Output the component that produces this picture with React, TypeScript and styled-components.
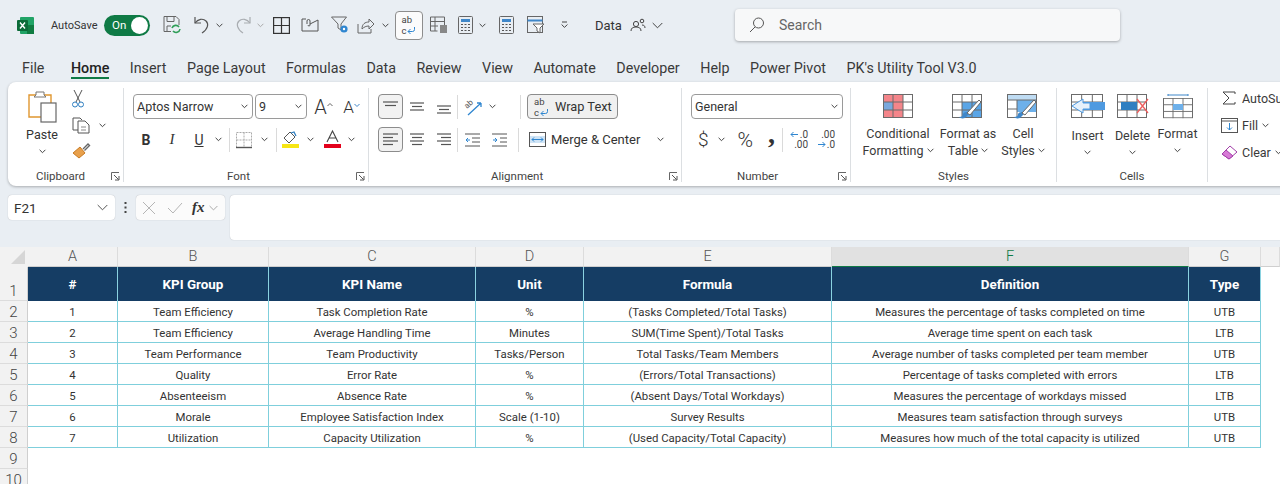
import React from "react";
import styled, { createGlobalStyle } from "styled-components";

const GlobalStyle = createGlobalStyle`
  html, body { margin: 0; padding: 0; background: #e9eef3; overflow: hidden; }
  body { font-family: Roboto, "Liberation Sans", sans-serif; color: #333; }
`;

const Page = styled.div`
  width: 1280px;
  height: 484px;
  overflow: hidden;
  display: flex;
  flex-direction: column;
  background: #e9eef3;
`;

/* ---- shared icon bits ---- */
const Svg = styled.svg<{ $ml?: number }>`
  display: block;
  flex: none;
  overflow: visible;
  margin-left: ${(p) => p.$ml ?? 0}px;
`;

type IconProps = { w: number; h: number; ml?: number; children?: React.ReactNode };
const Ic = ({ w, h, ml, children }: IconProps) => (
  <Svg width={w} height={h} viewBox={`0 0 ${w} ${h}`} fill="none" $ml={ml}>
    {children}
  </Svg>
);

const Chev = ({ ml, c = "#444" }: { ml?: number; c?: string }) => (
  <Ic w={7} h={5} ml={ml}>
    <path d="M.6 .8 3.5 3.7 6.4 .8" stroke={c} strokeWidth="1" />
  </Ic>
);

const Launcher = () => (
  <Ic w={9} h={9}>
    <path d="M.5 8V.5H8" stroke="#666" />
    <path d="M3 3 7.5 7.5M8 4v4H4" stroke="#555" />
  </Ic>
);

const Lines = ({ ml, rows, c = "#555" }: { ml?: number; rows: number[][]; c?: string }) => (
  <Ic w={15} h={15} ml={ml}>
    {rows.map(([a, b, y], i) => (
      <path key={i} d={`M${a} ${y}H${b}`} stroke={c} strokeWidth="1.2" />
    ))}
  </Ic>
);

const GridBase = ({ w = 30, h = 24, c = "#6b6b6b" }: { w?: number; h?: number; c?: string }) => (
  <>
    <rect x=".5" y=".5" width={w - 1} height={h - 1} stroke={c} />
    <path d={`M${w / 3} 0V${h}M${(2 * w) / 3} 0V${h}M0 ${h / 3}H${w}M0 ${(2 * h) / 3}H${w}`} stroke={c} />
  </>
);

const Brush = () => (
  <>
    <path d="M13 24c-3 1-5 0-6-1 3 0 4-1 4-3 1-2 5-3 6 0z" fill="#3f87c9" />
    <path d="M15 19 27 6l2 2-11 13z" fill="#fff" stroke="#666" />
  </>
);

/* "ab / c" wrap-text mark, in the quick access bar and on the Wrap Text button */
const WrapMark = styled.div`
  flex: none;
  font-size: 9.5px;
  line-height: 11px;
  color: #444;
`;
const WrapMarkLine = styled.div`
  display: flex;
  align-items: center;
  gap: 1px;
`;
const AbcMark = () => (
  <WrapMark>
    <WrapMarkLine>ab</WrapMarkLine>
    <WrapMarkLine>
      c
      <Ic w={9} h={9}>
        <path d="M7.5 1v2.5a2 2 0 0 1-2 2H1M3.5 3 1 5.5 3.5 8" stroke="#2f86d0" />
      </Ic>
    </WrapMarkLine>
  </WrapMark>
);

/* ---- title bar ---- */
const TitleBar = styled.div`
  height: 50px;
  padding-left: 17px;
  display: flex;
  align-items: center;
  flex: none;
`;
const AutoSave = styled.span`
  margin-left: 17px;
  width: 45px;
  flex: none;
  font-size: 11px;
  color: #333;
`;
const Toggle = styled.div`
  margin-left: 8px;
  width: 46px;
  height: 21px;
  box-sizing: border-box;
  flex: none;
  border-radius: 11px;
  background: #0f7a45;
  color: #fff;
  font-size: 11.5px;
  display: flex;
  align-items: center;
  justify-content: space-between;
  padding: 0 2px 0 8px;
  &::after {
    content: "";
    width: 17px;
    height: 17px;
    border-radius: 50%;
    background: #fff;
  }
`;
const QatBoxed = styled.div`
  margin-left: 6px;
  width: 28px;
  height: 29px;
  box-sizing: border-box;
  border: 1px solid #8d8d8d;
  border-radius: 4px;
  background: #fbfbfb;
  display: flex;
  align-items: center;
  justify-content: center;
  flex: none;
`;
const DocName = styled.span`
  margin-left: 27px;
  font-size: 13px;
  color: #333;
`;
const SearchBox = styled.div`
  margin-left: 72px;
  margin-bottom: 1px;
  width: 385px;
  height: 32px;
  box-sizing: border-box;
  flex: none;
  background: #f7f8f9;
  border-radius: 4px;
  box-shadow: 0 1px 3px rgba(0, 0, 0, 0.3);
  display: flex;
  align-items: center;
  gap: 15px;
  padding-left: 14px;
  font-size: 14px;
  color: #666;
`;

/* ---- tabs ---- */
const TabBar = styled.div`
  height: 32px;
  flex: none;
  display: flex;
  align-items: flex-start;
  padding: 7px 0 0 22px;
  gap: 20.5px;
  box-sizing: border-box;
`;
const Tab = styled.div<{ $on?: boolean }>`
  font-size: 14.3px;
  line-height: 22px;
  height: 20px;
  color: ${(p) => (p.$on ? "#222" : "#3a3a3a")};
  font-weight: ${(p) => (p.$on ? 500 : 400)};
  margin-left: ${(p) => (p.$on ? 6 : 0)}px;
  border-bottom: ${(p) => (p.$on ? "2px solid #0f7a45" : "2px solid transparent")};
  white-space: nowrap;
`;

/* ---- ribbon ---- */
const Ribbon = styled.div`
  margin-left: 8px;
  width: 1290px;
  height: 104px;
  flex: none;
  box-sizing: border-box;
  padding: 6px 0 4px;
  background: #fff;
  border-radius: 8px;
  box-shadow: 0 1px 3px rgba(0, 0, 0, 0.28);
  display: flex;
`;
const Group = styled.div<{ $w: number; $last?: boolean }>`
  width: ${(p) => p.$w}px;
  flex: none;
  box-sizing: border-box;
  display: flex;
  flex-direction: column;
  border-right: ${(p) => (p.$last ? "none" : "1px solid #dcdfe2")};
`;
const GroupBody = styled.div<{ $pl?: number }>`
  flex: 1;
  padding-left: ${(p) => p.$pl ?? 0}px;
  display: flex;
  min-height: 0;
`;
const GroupFoot = styled.div<{ $pl?: number }>`
  height: 12px;
  font-size: 11.5px;
  color: #444;
  display: flex;
  align-items: center;
  justify-content: space-between;
  padding: 0 3px 0 ${(p) => p.$pl ?? 0}px;
`;
const FootCentered = styled(GroupFoot)`
  justify-content: center;
  padding: 0;
`;
const Stack = styled.div`
  display: flex;
  flex-direction: column;
  padding-top: 6px;
  gap: 8px;
`;
const Row = styled.div`
  height: 25px;
  display: flex;
  align-items: center;
`;
const Select = styled.div<{ $w: number; $ml?: number }>`
  width: ${(p) => p.$w}px;
  margin-left: ${(p) => p.$ml ?? 0}px;
  height: 25px;
  box-sizing: border-box;
  flex: none;
  border: 1px solid #9a9a9a;
  border-radius: 4px;
  background: #fff;
  font-size: 12.5px;
  color: #333;
  display: flex;
  align-items: center;
  justify-content: space-between;
  padding: 0 4px 0 3px;
`;
const Sep = styled.div<{ $ml: number }>`
  width: 1px;
  height: 24px;
  flex: none;
  background: #dadada;
  margin-left: ${(p) => p.$ml}px;
`;
const Letter = styled.span<{ $ml: number; $w?: number }>`
  margin-left: ${(p) => p.$ml}px;
  width: ${(p) => p.$w ?? 10}px;
  flex: none;
  text-align: center;
  font-size: 14px;
  color: #333;
`;
const BoldLetter = styled(Letter)`
  font-weight: 700;
`;
const ItalicLetter = styled(Letter)`
  font-style: italic;
  font-family: "Liberation Serif", serif;
  font-size: 15px;
`;
const UnderLetter = styled(Letter)`
  text-decoration: underline;
`;
const GrowLetter = styled(Letter)<{ $size: number }>`
  font-size: ${(p) => p.$size}px;
  font-weight: 300;
`;
const SymbolText = styled.span<{ $ml: number; $size: number }>`
  margin-left: ${(p) => p.$ml}px;
  font-size: ${(p) => p.$size}px;
  font-weight: 300;
  color: #333;
  flex: none;
`;
const CommaText = styled.span`
  margin: 0 0 12px 15px;
  width: 8px;
  flex: none;
  font-family: "Liberation Serif", serif;
  font-weight: 700;
  font-size: 28px;
  line-height: 25px;
  color: #333;
`;
const AlignBtn = styled.div<{ $ml?: number }>`
  width: 25px;
  height: 25px;
  box-sizing: border-box;
  flex: none;
  margin-left: ${(p) => p.$ml ?? 0}px;
  border: 1px solid #8c8c8c;
  border-radius: 4px;
  background: #f2f2f2;
  display: flex;
  align-items: center;
  justify-content: center;
`;
const WrapBtn = styled.div<{ $ml: number }>`
  margin-left: ${(p) => p.$ml}px;
  width: 91px;
  height: 25px;
  box-sizing: border-box;
  flex: none;
  border: 1px solid #8c8c8c;
  border-radius: 4px;
  background: #f0f0f0;
  display: flex;
  align-items: center;
  gap: 6px;
  padding-left: 6px;
  font-size: 12.8px;
  color: #333;
`;
const MergeText = styled.span`
  margin-left: 5px;
  width: 106px;
  flex: none;
  font-size: 13px;
  color: #333;
`;
const DecStack = styled.div<{ $ml: number }>`
  margin-left: ${(p) => p.$ml}px;
  width: 18px;
  flex: none;
  font-size: 10px;
  line-height: 10px;
  color: #444;
  display: flex;
  flex-direction: column;
  align-items: flex-end;
`;
const DecLine = styled.div`
  display: flex;
  align-items: center;
  gap: 1px;
`;

const PasteCol = styled.div`
  width: 48px;
  margin-left: 10px;
  padding-top: 2px;
  display: flex;
  flex-direction: column;
  align-items: center;
  font-size: 12.5px;
  color: #333;
`;
const PasteLabel = styled.div`
  margin-top: 4px;
  line-height: 16px;
`;
const PasteChev = styled.div`
  margin-top: 6px;
`;
const ClipCol = styled.div`
  margin-left: 2px;
  padding-top: 1px;
  display: flex;
  flex-direction: column;
  gap: 6px;
`;
const ClipRow = styled.div`
  display: flex;
  align-items: center;
  height: 20px;
  padding-left: 4px;
`;

const Large = styled.div<{ $w: number; $ml?: number }>`
  width: ${(p) => p.$w}px;
  margin-left: ${(p) => p.$ml ?? 0}px;
  flex: none;
  padding-top: 6px;
  display: flex;
  flex-direction: column;
  align-items: center;
  font-size: 12.5px;
  line-height: 17px;
  color: #3a3a3a;
`;
const LargeText = styled.div<{ $mt: number }>`
  margin-top: ${(p) => p.$mt}px;
  display: flex;
  flex-direction: column;
  align-items: center;
  white-space: nowrap;
`;
const LabelLine = styled.div`
  display: flex;
  align-items: center;
  gap: 3px;
`;
const ChevLine = styled.div`
  height: 17px;
  display: flex;
  align-items: center;
`;

const EditCol = styled.div`
  padding: 0 0 0 13px;
  display: flex;
  flex-direction: column;
  gap: 7px;
`;
const EditRow = styled.div`
  height: 20px;
  display: flex;
  align-items: center;
  gap: 4px;
  font-size: 12.5px;
  color: #3a3a3a;
  white-space: nowrap;
`;

/* ---- formula bar ---- */
const FormulaBar = styled.div`
  margin-top: 9px;
  height: 52px;
  flex: none;
  display: flex;
  align-items: flex-start;
  padding-left: 8px;
`;
const NameBox = styled.div`
  width: 107px;
  height: 25px;
  box-sizing: border-box;
  background: #fff;
  border-radius: 4px;
  box-shadow: 0 0 1px rgba(0, 0, 0, 0.3);
  display: flex;
  align-items: center;
  justify-content: space-between;
  padding: 0 7px 0 6px;
  font-size: 13.5px;
  color: #333;
`;
const DotsSlot = styled.div`
  width: 21px;
  height: 25px;
  display: flex;
  align-items: center;
  justify-content: center;
`;
const FxBox = styled.div`
  width: 89px;
  height: 25px;
  box-sizing: border-box;
  background: #fbfbfb;
  border-radius: 4px;
  box-shadow: 0 0 1px rgba(0, 0, 0, 0.3);
  display: flex;
  align-items: center;
  padding-left: 6px;
`;
const FxLabel = styled.span`
  margin-left: 9px;
  font-family: "Liberation Serif", serif;
  font-style: italic;
  font-weight: 700;
  font-size: 15px;
  color: #333;
`;
const FormulaInput = styled.div`
  margin-left: 5px;
  flex: 1;
  height: 45px;
  background: #fff;
  border-radius: 4px 0 0 4px;
  box-shadow: 0 0 1px rgba(0, 0, 0, 0.3);
`;

/* ---- sheet ---- */
const Sheet = styled.div`
  flex: 1;
  background: #fff;
  display: grid;
  grid-template-columns: 28px 90px 151px 207px 108px 248px 357px 72px 1fr;
  grid-template-rows: 20px 34px repeat(9, 21px);
`;
const Corner = styled.div`
  background: #f2f2f2;
  display: flex;
  align-items: flex-end;
  justify-content: flex-end;
  padding: 0 3px 3px 0;
`;
const ColHead = styled.div<{ $on?: boolean }>`
  background: ${(p) => (p.$on ? "#e1e1e1" : "#f2f2f2")};
  border-right: 1px solid #dcdcdc;
  border-bottom: 1px solid ${(p) => (p.$on ? "#0f7a45" : "#cfcfcf")};
  box-sizing: border-box;
  display: flex;
  align-items: center;
  justify-content: center;
  font-size: 14.5px;
  font-weight: 300;
  color: ${(p) => (p.$on ? "#0f7a45" : "#555")};
`;
const RowHead = styled.div`
  grid-column: 1;
  background: #f2f2f2;
  border-bottom: 1px solid #dcdcdc;
  border-right: 1px solid #cfcfcf;
  box-sizing: border-box;
  display: flex;
  align-items: flex-end;
  justify-content: center;
  font-size: 15px;
  font-weight: 300;
  line-height: 17px;
  color: #444;
`;
const HeadCell = styled.div`
  background: #153d64;
  color: #fff;
  font-weight: 700;
  font-size: 13.4px;
  border-right: 1px solid #8ad2e0;
  box-sizing: border-box;
  display: flex;
  align-items: center;
  justify-content: center;
`;
const Cell = styled.div`
  border-right: 1px solid #7fcfdc;
  border-bottom: 1px solid #7fcfdc;
  box-sizing: border-box;
  display: flex;
  align-items: center;
  justify-content: center;
  padding-top: 1px;
  font-size: 11.4px;
  color: #333;
  white-space: nowrap;
`;
const Blank = styled.div``;
const WideBlank = styled.div`
  grid-column: 2 / -1;
`;

const columns = ["A", "B", "C", "D", "E", "F", "G"];
const headers = ["#", "KPI Group", "KPI Name", "Unit", "Formula", "Definition", "Type"];
const kpis = [
  ["1", "Team Efficiency", "Task Completion Rate", "%", "(Tasks Completed/Total Tasks)", "Measures the percentage of tasks completed on time", "UTB"],
  ["2", "Team Efficiency", "Average Handling Time", "Minutes", "SUM(Time Spent)/Total Tasks", "Average time spent on each task", "LTB"],
  ["3", "Team Performance", "Team Productivity", "Tasks/Person", "Total Tasks/Team Members", "Average number of tasks completed per team member", "UTB"],
  ["4", "Quality", "Error Rate", "%", "(Errors/Total Transactions)", "Percentage of tasks completed with errors", "LTB"],
  ["5", "Absenteeism", "Absence Rate", "%", "(Absent Days/Total Workdays)", "Measures the percentage of workdays missed", "LTB"],
  ["6", "Morale", "Employee Satisfaction Index", "Scale (1-10)", "Survey Results", "Measures team satisfaction through surveys", "UTB"],
  ["7", "Utilization", "Capacity Utilization", "%", "(Used Capacity/Total Capacity)", "Measures how much of the total capacity is utilized", "UTB"],
];
const tabs = ["Insert", "Page Layout", "Formulas", "Data", "Review", "View", "Automate", "Developer", "Help", "Power Pivot", "PK's Utility Tool V3.0"];

const CalcIcon = ({ ml }: { ml: number }) => (
  <Ic w={15} h={18} ml={ml}>
    <rect x=".5" y=".5" width="14" height="17" rx="1" stroke="#666" />
    <rect x="3" y="3" width="9" height="3" fill="#3f87c9" />
    <path d="M3 8.5h2M6.5 8.5h2M10 8.5h2M3 11.5h2M6.5 11.5h2M10 11.5h2M3 14.5h2M6.5 14.5h2M10 14.5h2" stroke="#555" />
  </Ic>
);

export default function App() {
  return (
    <Page>
      <GlobalStyle />
      <TitleBar>
        <Ic w={17} h={17}>
          <rect x="3" y="0" width="14" height="17" rx="1" fill="#21a366" />
          <rect x="10" y="8" width="7" height="9" fill="#107c41" />
          <rect x="0" y="3" width="11" height="11" rx="1" fill="#0b6b38" />
          <path d="M3 5.5 8 11.5M8 5.5 3 11.5" stroke="#fff" strokeWidth="1.4" />
        </Ic>
        <AutoSave>AutoSave</AutoSave>
        <Toggle>On</Toggle>
        <Ic w={18} h={18} ml={13}>
          <path d="M1 .5h12l3 3V9M1 .5v15h7" stroke="#666" />
          <path d="M4 .5v5h7v-5M4 16v-6h4" stroke="#666" />
          <path d="M9 12a4 4 0 0 1 7-1M17 13a4 4 0 0 1-7 2" stroke="#2f9e58" strokeWidth="1.6" />
        </Ic>
        <Ic w={18} h={18} ml={12}>
          <path d="M2 1v6h6" stroke="#555" strokeWidth="1.2" />
          <path d="M2 7c3-4 8-5 11-2 3 3 2 8-4 12" stroke="#555" strokeWidth="1.2" />
        </Ic>
        <Chev ml={5} />
        <Ic w={18} h={18} ml={11}>
          <path d="M16 1v6h-6" stroke="#a9adb1" strokeWidth="1.2" />
          <path d="M16 7c-3-4-8-5-11-2-3 3-2 8 4 12" stroke="#a9adb1" strokeWidth="1.2" />
        </Ic>
        <Chev ml={5} c="#aaa" />
        <Ic w={17} h={17} ml={9}>
          <rect x=".6" y=".6" width="15.8" height="15.8" stroke="#333" strokeWidth="1.2" />
          <path d="M8.5 0v17M0 8.5h17" stroke="#333" strokeWidth="1.2" />
        </Ic>
        <Ic w={18} h={14} ml={11}>
          <path d="M5 1H1v12h16V2" stroke="#555" />
          <path d="M6 6V3a1.5 1.5 0 0 1 3 0v4a1 1 0 0 1-2 0M9 6l8-4" stroke="#555" />
        </Ic>
        <Ic w={18} h={18} ml={12}>
          <path d="M.5 1h15L10 8v6L7 12V8z" stroke="#666" />
          <circle cx="13" cy="13" r="3.6" fill="#2f86d0" />
          <circle cx="13" cy="13" r="1.2" fill="#fff" />
        </Ic>
        <Ic w={18} h={18} ml={8}>
          <path d="M1 8v9h13v-4" stroke="#666" />
          <path d="M5 13c0-5 3-7 7-7V3l5 5-5 5v-3c-3 0-5 1-7 3z" stroke="#666" />
        </Ic>
        <Chev ml={7} />
        <QatBoxed>
          <AbcMark />
        </QatBoxed>
        <Ic w={18} h={18} ml={7}>
          <path d="M.5 1h14v8M.5 1v14h7M5 1v14M.5 5.5H14M.5 10H8" stroke="#666" />
          <rect x="10" y="9" width="7" height="8" fill="#888" />
        </Ic>
        <CalcIcon ml={10} />
        <Chev ml={6} />
        <CalcIcon ml={13} />
        <Ic w={18} h={18} ml={13}>
          <rect x=".5" y=".5" width="15" height="16" stroke="#666" />
          <path d="M.5 4.5h15" stroke="#3f87c9" strokeWidth="2" />
          <path d="M6 8h11l-4 4v5l-3-2v-3z" fill="#fff" stroke="#666" />
        </Ic>
        <Ic w={7} h={8} ml={16}>
          <path d="M1 1h5M.6 3.5 3.5 6.4 6.4 3.5" stroke="#444" />
        </Ic>
        <DocName>Data</DocName>
        <Ic w={16} h={14} ml={8}>
          <circle cx="6" cy="6" r="2.6" stroke="#444" />
          <path d="M1 13c0-3 2-4 5-4s5 1 5 4" stroke="#444" />
          <circle cx="12" cy="3" r="1.8" stroke="#444" />
          <path d="M12 7c2 0 3 1 3 3" stroke="#444" />
        </Ic>
        <Ic w={11} h={7} ml={6}>
          <path d="M.7 1 5.5 5.8 10.3 1" stroke="#444" />
        </Ic>
        <SearchBox>
          <Ic w={15} h={16}>
            <circle cx="9.5" cy="6" r="5" stroke="#555" />
            <path d="M6 10 1 15" stroke="#555" />
          </Ic>
          Search
        </SearchBox>
      </TitleBar>

      <TabBar>
        <Tab>File</Tab>
        <Tab $on>Home</Tab>
        {tabs.map((t) => (
          <Tab key={t}>{t}</Tab>
        ))}
      </TabBar>

      <Ribbon>
        <Group $w={116}>
          <GroupBody>
            <PasteCol>
              <Ic w={30} h={33}>
                <path d="M2 5h22v22H2z" stroke="#e0962f" strokeWidth="1.4" />
                <path d="M9 5V2h8v3l2 2H7z" fill="#fff" stroke="#777" />
                <rect x="14" y="13" width="15" height="19" fill="#fff" stroke="#666" strokeWidth="1.2" />
              </Ic>
              <PasteLabel>Paste</PasteLabel>
              <PasteChev>
                <Chev />
              </PasteChev>
            </PasteCol>
            <ClipCol>
              <ClipRow>
                <Ic w={12} h={18}>
                  <path d="M2 0l6 12M10 0 4 12" stroke="#555" />
                  <circle cx="3" cy="14.5" r="2.5" stroke="#2f7fc1" />
                  <circle cx="9" cy="14.5" r="2.5" stroke="#2f7fc1" />
                </Ic>
              </ClipRow>
              <ClipRow>
                <Ic w={18} h={17}>
                  <path d="M6 13H1V1h7l2 2" stroke="#555" />
                  <path d="M6 4h7l4 4v8H6z" fill="#fff" stroke="#555" />
                  <path d="M9 10h5M9 13h5" stroke="#888" />
                </Ic>
                <Chev ml={9} />
              </ClipRow>
              <ClipRow>
                <Ic w={18} h={16}>
                  <path d="M1 10 8 4l5 6-6 5z" fill="#e8a04c" stroke="#c87a22" />
                  <path d="M11 6l5-5 1.5 1.5-5 5" stroke="#666" strokeWidth="1.4" />
                </Ic>
              </ClipRow>
            </ClipCol>
          </GroupBody>
          <GroupFoot $pl={28}>
            Clipboard
            <Launcher />
          </GroupFoot>
        </Group>

        <Group $w={245}>
          <GroupBody>
            <Stack>
              <Row>
                <Select $w={120} $ml={9}>
                  Aptos Narrow
                  <Chev />
                </Select>
                <Select $w={52} $ml={2}>
                  9
                  <Chev />
                </Select>
                <GrowLetter $ml={7} $w={13} $size={20}>A</GrowLetter>
                <Ic w={6} h={10}>
                  <path d="M.5 4 3 1.5 5.5 4" stroke="#666" />
                </Ic>
                <GrowLetter $ml={10} $w={11} $size={17}>A</GrowLetter>
                <Ic w={6} h={10}>
                  <path d="M.5 2 3 4.5 5.5 2" stroke="#3f87c9" />
                </Ic>
              </Row>
              <Row>
                <BoldLetter $ml={17}>B</BoldLetter>
                <ItalicLetter $ml={16}>I</ItalicLetter>
                <UnderLetter $ml={17}>U</UnderLetter>
                <Chev ml={11} />
                <Sep $ml={7} />
                <Ic w={16} h={16} ml={6}>
                  <path d="M.5.5h15v15H.5zM8 .5v15M.5 8h15" stroke="#aaa" strokeDasharray="2 1" />
                  <path d="M0 15.5h16" stroke="#555" strokeWidth="1.4" />
                </Ic>
                <Chev ml={9} />
                <Sep $ml={8} />
                <Ic w={17} h={19} ml={5}>
                  <path d="M2 8 8 2l5 5-6 6z" stroke="#555" />
                  <path d="M9 3l3-1 2 4" stroke="#2f7fc1" strokeWidth="1.3" />
                  <rect x="0" y="14" width="17" height="4" fill="#f7e615" />
                </Ic>
                <Chev ml={8} />
                <Ic w={17} h={19} ml={10}>
                  <path d="M3 12 8.5 1 14 12M5 8h7" stroke="#444" strokeWidth="1.1" />
                  <rect x="0" y="14" width="17" height="4" fill="#e3001b" />
                </Ic>
                <Chev ml={7} />
              </Row>
            </Stack>
          </GroupBody>
          <GroupFoot $pl={103}>
            Font
            <Launcher />
          </GroupFoot>
        </Group>

        <Group $w={313}>
          <GroupBody>
            <Stack>
              <Row>
                <AlignBtn $ml={9}>
                  <Lines rows={[[0, 15, 3], [2, 13, 6.5]]} />
                </AlignBtn>
                <Lines ml={6} rows={[[1, 15, 4], [3, 13, 7.5], [1, 15, 11]]} />
                <Lines ml={12} rows={[[1, 15, 7], [3, 13, 10.5], [1, 15, 14]]} />
                <Sep $ml={6} />
                <Ic w={18} h={16} ml={7}>
                  <path d="M3 16 16 4M16 4h-4M16 4v4" stroke="#2f86d0" strokeWidth="1.3" />
                  <text x="2" y="10" fontSize="8" fill="#555" transform="rotate(-42 2 10)">ab</text>
                </Ic>
                <Chev ml={6} />
                <Sep $ml={24} />
                <WrapBtn $ml={6}>
                  <AbcMark />
                  Wrap Text
                </WrapBtn>
              </Row>
              <Row>
                <AlignBtn $ml={9}>
                  <Lines rows={[[0, 15, 2], [0, 10, 5.5], [0, 15, 9], [0, 10, 12.5]]} />
                </AlignBtn>
                <Lines ml={6} rows={[[1, 15, 2], [3, 13, 5.5], [1, 15, 9], [3, 13, 12.5]]} />
                <Lines ml={12} rows={[[1, 15, 2], [5, 15, 5.5], [1, 15, 9], [5, 15, 12.5]]} />
                <Sep $ml={6} />
                <Ic w={15} h={14} ml={7}>
                  <path d="M0 1h15M7 5h8M7 9h8M0 13h15" stroke="#555" />
                  <path d="M5 7H1M3 5 1 7l2 2" stroke="#2f86d0" />
                </Ic>
                <Ic w={15} h={14} ml={12}>
                  <path d="M0 1h15M8 5h7M8 9h7M0 13h15" stroke="#555" />
                  <path d="M1 7h4M3 5l2 2-2 2" stroke="#2f86d0" />
                </Ic>
                <Sep $ml={11} />
                <Ic w={17} h={15} ml={10}>
                  <rect x=".5" y=".5" width="16" height="14" stroke="#555" />
                  <rect x="1" y="4" width="15" height="7" fill="#cfe4f6" />
                  <path d="M3 7.5h11M5 5.5l-2 2 2 2M12 5.5l2 2-2 2" stroke="#2f86d0" />
                </Ic>
                <MergeText>Merge &amp; Center</MergeText>
                <Chev />
              </Row>
            </Stack>
          </GroupBody>
          <GroupFoot $pl={122}>
            Alignment
            <Launcher />
          </GroupFoot>
        </Group>

        <Group $w={169}>
          <GroupBody>
            <Stack>
              <Row>
                <Select $w={152} $ml={9}>
                  General
                  <Chev />
                </Select>
              </Row>
              <Row>
                <SymbolText $ml={16} $size={19}>$</SymbolText>
                <Chev ml={9} />
                <SymbolText $ml={13} $size={21}>%</SymbolText>
                <CommaText>,</CommaText>
                <Sep $ml={6} />
                <DecStack $ml={7}>
                  <DecLine>
                    <Ic w={9} h={7}>
                      <path d="M8 3.5H1M3.5 1 1 3.5 3.5 6" stroke="#2f86d0" />
                    </Ic>
                    .0
                  </DecLine>
                  <DecLine>.00</DecLine>
                </DecStack>
                <DecStack $ml={9}>
                  <DecLine>.00</DecLine>
                  <DecLine>
                    <Ic w={9} h={7}>
                      <path d="M1 3.5h7M5.5 1 8 3.5 5.5 6" stroke="#2f86d0" />
                    </Ic>
                    .0
                  </DecLine>
                </DecStack>
              </Row>
            </Stack>
          </GroupBody>
          <GroupFoot $pl={55}>
            Number
            <Launcher />
          </GroupFoot>
        </Group>

        <Group $w={206}>
          <GroupBody>
            <Large $w={68} $ml={13}>
              <Ic w={30} h={24}>
                <rect x="0" y="0" width="20" height="8" fill="#f4858a" />
                <rect x="10" y="16" width="10" height="8" fill="#f4858a" />
                <rect x="0" y="16" width="10" height="8" fill="#f4858a" />
                <rect x="10" y="8" width="10" height="8" fill="#f4858a" />
                <rect x="0" y="8" width="10" height="8" fill="#7aa8dc" />
                <GridBase />
              </Ic>
              <LargeText $mt={7}>
                <LabelLine>Conditional</LabelLine>
                <LabelLine>
                  Formatting <Chev />
                </LabelLine>
              </LargeText>
            </Large>
            <Large $w={70} $ml={1}>
              <Ic w={32} h={24}>
                <rect x="10" y="8" width="20" height="16" fill="#5aa5e6" />
                <GridBase />
                <Brush />
              </Ic>
              <LargeText $mt={7}>
                <LabelLine>Format as</LabelLine>
                <LabelLine>
                  Table <Chev />
                </LabelLine>
              </LargeText>
            </Large>
            <Large $w={40}>
              <Ic w={32} h={24}>
                <rect x="0" y="0" width="30" height="6" fill="#bfdcf3" />
                <rect x="10" y="6" width="20" height="12" fill="#6db0ea" />
                <rect x=".5" y=".5" width="29" height="23" stroke="#6b6b6b" />
                <path d="M0 6H30M10 6V24M0 15H10" stroke="#6b6b6b" />
                <Brush />
              </Ic>
              <LargeText $mt={7}>
                <LabelLine>Cell</LabelLine>
                <LabelLine>
                  Styles <Chev />
                </LabelLine>
              </LargeText>
            </Large>
          </GroupBody>
          <FootCentered>Styles</FootCentered>
        </Group>

        <Group $w={151}>
          <GroupBody>
            <Large $w={45} $ml={8}>
              <Ic w={34} h={24}>
                <GridBase w={32} />
                <rect x="6" y="8" width="28" height="8" fill="#4f9ae0" />
                <path d="M12 5 1 12l11 7v-4h7V9h-7z" fill="#e6f1fb" stroke="#4f9ae0" />
              </Ic>
              <LargeText $mt={9}>
                <LabelLine>Insert</LabelLine>
                <ChevLine>
                  <Chev />
                </ChevLine>
              </LargeText>
            </Large>
            <Large $w={45}>
              <Ic w={32} h={24}>
                <GridBase />
                <rect x="4" y="8" width="16" height="8" fill="#2f7fc1" />
                <path d="M20 5 31 19M31 5 20 19" stroke="#ec5d5d" strokeWidth="1.3" />
              </Ic>
              <LargeText $mt={9}>
                <LabelLine>Delete</LabelLine>
                <ChevLine>
                  <Chev />
                </ChevLine>
              </LargeText>
            </Large>
            <Large $w={45}>
              <Ic w={30} h={24}>
                <path d="M5 1h20M5 0v2M25 0v2" stroke="#3f87c9" />
                <g transform="translate(0 4) scale(1 .84)">
                  <GridBase />
                </g>
                <rect x="10" y="10" width="10" height="6" fill="#6db0ea" />
              </Ic>
              <LargeText $mt={7}>
                <LabelLine>Format</LabelLine>
                <ChevLine>
                  <Chev />
                </ChevLine>
              </LargeText>
            </Large>
          </GroupBody>
          <FootCentered>Cells</FootCentered>
        </Group>

        <Group $w={90} $last>
          <GroupBody>
            <EditCol>
              <EditRow>
                <Ic w={17} h={14}>
                  <path d="M14 3V1H2l6 6-6 6h12v-2" stroke="#444" />
                </Ic>
                AutoSum
              </EditRow>
              <EditRow>
                <Ic w={17} h={15}>
                  <rect x=".5" y=".5" width="16" height="14" stroke="#555" />
                  <path d="M1 3h15" stroke="#555" />
                  <path d="M8.5 5v7M6 9.5l2.5 2.5L11 9.5" stroke="#2f86d0" />
                </Ic>
                Fill <Chev />
              </EditRow>
              <EditRow>
                <Ic w={17} h={15}>
                  <path d="M1 9 9 1l7 6-8 7z" fill="#fff" stroke="#a23ea8" />
                  <path d="M1 9 5 5l7 6-4 3z" fill="#d77ad6" stroke="#a23ea8" />
                </Ic>
                Clear <Chev />
              </EditRow>
            </EditCol>
          </GroupBody>
        </Group>
      </Ribbon>

      <FormulaBar>
        <NameBox>
          F21
          <Ic w={11} h={7}>
            <path d="M.7 1 5.5 5.8 10.3 1" stroke="#555" />
          </Ic>
        </NameBox>
        <DotsSlot>
          <Ic w={3} h={13}>
            <path d="M1.5 1v2M1.5 5.5v2M1.5 10v2" stroke="#444" strokeWidth="2" />
          </Ic>
        </DotsSlot>
        <FxBox>
          <Ic w={14} h={14}>
            <path d="M1 1 13 13M13 1 1 13" stroke="#b5b5b5" />
          </Ic>
          <Ic w={16} h={12} ml={11}>
            <path d="M1 6 6 11 15 1" stroke="#b5b5b5" />
          </Ic>
          <FxLabel>fx</FxLabel>
          <Ic w={9} h={6} ml={4}>
            <path d="M.6 1 4.5 4.9 8.4 1" stroke="#aaa" />
          </Ic>
        </FxBox>
        <FormulaInput />
      </FormulaBar>

      <Sheet>
        <Corner>
          <Ic w={14} h={14}>
            <path d="M14 0V14H0z" fill="#d6d6d6" />
          </Ic>
        </Corner>
        {columns.map((c) => (
          <ColHead key={c} $on={c === "F"}>
            {c}
          </ColHead>
        ))}
        <ColHead />

        <RowHead>1</RowHead>
        {headers.map((h) => (
          <HeadCell key={h}>{h}</HeadCell>
        ))}
        <Blank />

        {kpis.map((row, i) => (
          <React.Fragment key={row[0]}>
            <RowHead>{i + 2}</RowHead>
            {row.map((v, j) => (
              <Cell key={j}>{v}</Cell>
            ))}
            <Blank />
          </React.Fragment>
        ))}
        <RowHead>9</RowHead>
        <WideBlank />
        <RowHead>10</RowHead>
        <WideBlank />
      </Sheet>
    </Page>
  );
}
